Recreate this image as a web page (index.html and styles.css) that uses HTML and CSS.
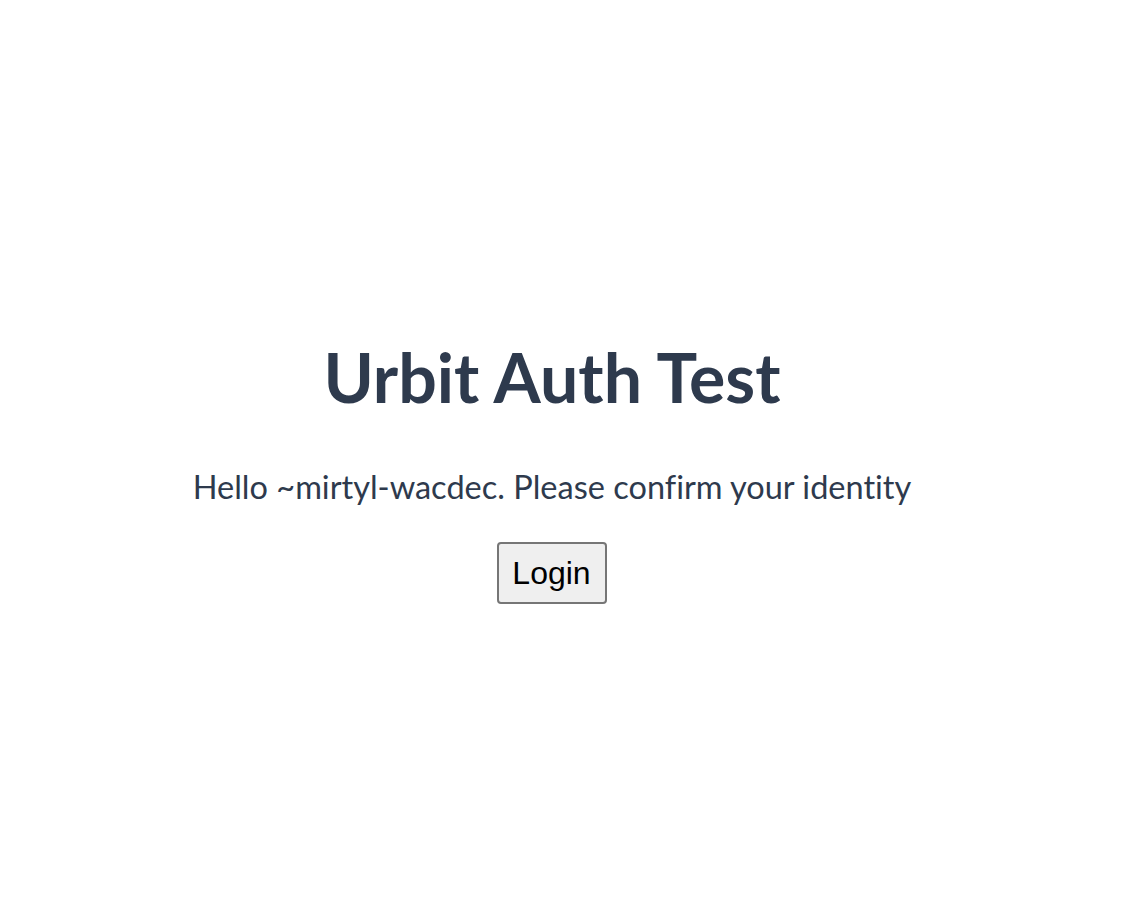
FILE: index.html
```html
<!DOCTYPE html>
<html>
<head>
<meta charset="utf-8">
<link rel="stylesheet" href="styles.css">
</head>
<body>
<main class="page">
  <h1 class="title">Urbit Auth Test</h1>
  <p class="greeting">Hello ~mirtyl-wacdec. Please confirm your identity</p>
  <button class="login">Login</button>
</main>
</body>
</html>
```
FILE: styles.css
```css
html, body {
  margin: 0;
  padding: 0;
  background: #ffffff;
}
.page {
  width: 1104px;
  height: 924px;
  box-sizing: border-box;
  padding-top: 337px;
  display: flex;
  flex-direction: column;
  align-items: center;
  font-family: "Lato", "Noto Sans", sans-serif;
  font-variant-ligatures: none;
  color: #2e3a4d;
}
.title {
  margin: 0;
  font-size: 68px;
  font-weight: 700;
  line-height: 80px;
}
.greeting {
  margin: 50px 0 0 0;
  font-size: 32.5px;
  font-weight: 400;
  line-height: 40px;
}
.login {
  margin-top: 35px;
  font-family: "Liberation Sans", Arial, sans-serif;
  font-size: 32px;
  color: #000;
  background: #efefef;
  border: 2px solid #767676;
  border-radius: 4px;
  padding: 11px 14px 11px 13px;
  line-height: 36px;
}
```
